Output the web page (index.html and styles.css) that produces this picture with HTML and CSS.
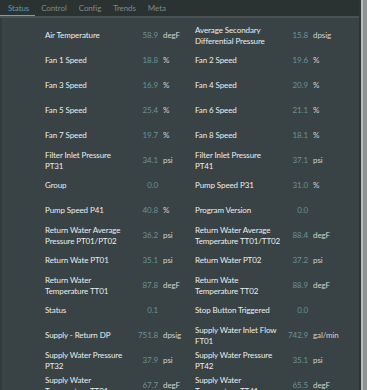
FILE: index.html
```html
<!DOCTYPE html>
<html lang="en">
<head>
    <meta charset="UTF-8">
    <meta name="viewport" content="width=device-width, initial-scale=1.0">
    <title>Status</title>
    <link rel="stylesheet" href="styles.css">
</head>
<body>
    <div class="window">
        <div class="main">
            <nav class="tabs">
                <span class="tab active">Status</span>
                <span class="tab">Control</span>
                <span class="tab">Config</span>
                <span class="tab">Trends</span>
                <span class="tab">Meta</span>
            </nav>
            <div class="panel">
                <div class="grid">
                    <div class="cell"><span class="label">Air Temperature</span><span class="value">58.9</span><span class="unit">degF</span></div>
                    <div class="cell"><span class="label">Average Secondary Differential Pressure</span><span class="value">15.8</span><span class="unit">dpsig</span></div>
                    <div class="cell"><span class="label">Fan 1 Speed</span><span class="value">18.8</span><span class="unit">%</span></div>
                    <div class="cell"><span class="label">Fan 2 Speed</span><span class="value">19.6</span><span class="unit">%</span></div>
                    <div class="cell"><span class="label">Fan 3 Speed</span><span class="value">16.9</span><span class="unit">%</span></div>
                    <div class="cell"><span class="label">Fan 4 Speed</span><span class="value">20.9</span><span class="unit">%</span></div>
                    <div class="cell"><span class="label">Fan 5 Speed</span><span class="value">25.4</span><span class="unit">%</span></div>
                    <div class="cell"><span class="label">Fan 6 Speed</span><span class="value">21.1</span><span class="unit">%</span></div>
                    <div class="cell"><span class="label">Fan 7 Speed</span><span class="value">19.7</span><span class="unit">%</span></div>
                    <div class="cell"><span class="label">Fan 8 Speed</span><span class="value">18.1</span><span class="unit">%</span></div>
                    <div class="cell"><span class="label">Filter Inlet Pressure PT31</span><span class="value">34.1</span><span class="unit">psi</span></div>
                    <div class="cell"><span class="label">Filter Inlet Pressure PT41</span><span class="value">37.1</span><span class="unit">psi</span></div>
                    <div class="cell"><span class="label">Group</span><span class="value">0.0</span><span class="unit"></span></div>
                    <div class="cell"><span class="label">Pump Speed P31</span><span class="value">31.0</span><span class="unit">%</span></div>
                    <div class="cell"><span class="label">Pump Speed P41</span><span class="value">40.8</span><span class="unit">%</span></div>
                    <div class="cell"><span class="label">Program Version</span><span class="value">0.0</span><span class="unit"></span></div>
                    <div class="cell"><span class="label">Return Water Average Pressure PT01/PT02</span><span class="value">36.2</span><span class="unit">psi</span></div>
                    <div class="cell"><span class="label">Return Water Average Temperature TT01/TT02</span><span class="value">88.4</span><span class="unit">degF</span></div>
                    <div class="cell"><span class="label">Return Wate PT01</span><span class="value">35.1</span><span class="unit">psi</span></div>
                    <div class="cell"><span class="label">Return Water PT02</span><span class="value">37.2</span><span class="unit">psi</span></div>
                    <div class="cell"><span class="label">Return Water Temperature TT01</span><span class="value">87.8</span><span class="unit">degF</span></div>
                    <div class="cell"><span class="label">Return Wate Temperature TT02</span><span class="value">88.9</span><span class="unit">degF</span></div>
                    <div class="cell"><span class="label">Status</span><span class="value">0.1</span><span class="unit"></span></div>
                    <div class="cell"><span class="label">Stop Button Triggered</span><span class="value">0.0</span><span class="unit"></span></div>
                    <div class="cell"><span class="label">Supply - Return DP</span><span class="value">751.8</span><span class="unit">dpsig</span></div>
                    <div class="cell"><span class="label">Supply Water Inlet Flow FT01</span><span class="value">742.9</span><span class="unit">gal/min</span></div>
                    <div class="cell"><span class="label">Supply Water Pressure PT32</span><span class="value">37.9</span><span class="unit">psi</span></div>
                    <div class="cell"><span class="label">Supply Water Pressure PT42</span><span class="value">35.1</span><span class="unit">psi</span></div>
                    <div class="cell"><span class="label">Supply Water Temperature TT21</span><span class="value">67.7</span><span class="unit">degF</span></div>
                    <div class="cell"><span class="label">Supply Water Temperature TT41</span><span class="value">65.5</span><span class="unit">degF</span></div>
                </div>
            </div>
        </div>
        <div class="scrollbar"></div>
    </div>
</body>
</html>
```

FILE: styles.css
```css
html, body {
    margin: 0;
    padding: 0;
    height: 100%;
    overflow: hidden;
}
body {
    background-color: #394244;
    font-family: Lato, "Open Sans", sans-serif;
    color: #e2e4e4;
}
.window {
    display: flex;
    height: 100%;
}
.main {
    flex: 1;
    display: flex;
    flex-direction: column;
    min-width: 0;
}
.tabs {
    display: flex;
    height: 16px;
    background-color: #2b3232;
    border-bottom: 2px solid #485253;
    font-size: 8px;
    letter-spacing: -0.1px;
    line-height: 17px;
}
.tab {
    padding: 0 6px;
    color: #7f8a8a;
}
.tab:first-child {
    padding-left: 8px;
}
.tab.active {
    color: #5c9bad;
    box-shadow: inset 0 -1px 0 #8d9999;
}
.panel {
    flex: 1;
    border-left: 2px solid #323a3b;
    padding: 5px 0 0 43px;
}
.grid {
    display: grid;
    grid-template-columns: 150px 150px;
    grid-auto-rows: 25px;
}
.cell {
    display: grid;
    grid-template-columns: 86px 27px 37px;
    align-items: center;
    font-size: 8px;
    letter-spacing: -0.1px;
    line-height: 11px;
}
.label {
    color: #eceeee;
}
.value {
    text-align: right;
    color: #6a9496;
}
.unit {
    padding-left: 5px;
    color: #d0d4d4;
}
.scrollbar {
    width: 8px;
    background: linear-gradient(to right, #2e3536 0, #2e3536 2px, #b9bcbc 2px, #b9bcbc 4px, #8e9292 4px);
}
```
